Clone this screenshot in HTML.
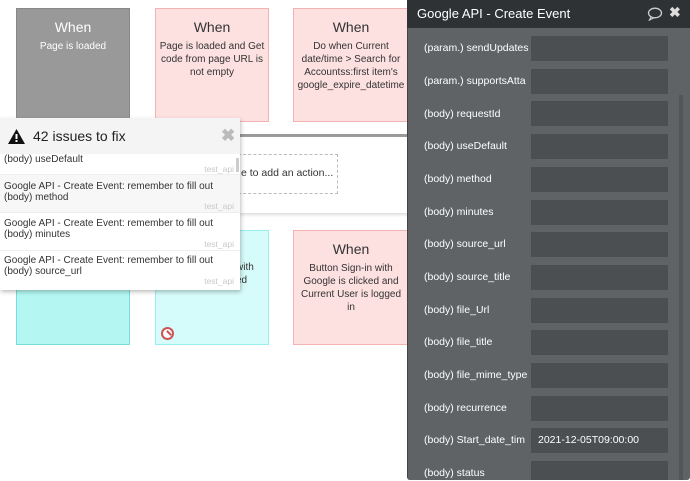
<!DOCTYPE html>
<html><head><style>
*{margin:0;padding:0;box-sizing:border-box}
body{width:690px;height:481px;overflow:hidden;background:#fff;font-family:"Liberation Sans",sans-serif;position:relative}
.b{position:absolute;text-align:center;font-size:10px;line-height:13px;color:#333;padding:9px 3px 0}
.b h{display:block;font-size:14px;line-height:18px;margin-bottom:4px}
.pk{background:#fde0e0;border:1px solid #f4b3b3}
.lab{position:absolute;left:424px;color:#fff;font-size:10.5px}
.inp{position:absolute;left:531px;width:137px;height:25px;background:#4c4f52;color:#fff;font-size:10.5px;padding:6px 0 0 7px}
.it{position:absolute;left:0;width:240px;font-size:10px;line-height:11px;color:#333;padding-left:4px;border-bottom:1px solid #eee}
.ta{position:absolute;right:6px;font-size:8.5px;color:#c8c8c8}
</style></head><body>
<div class="b" style="left:16px;top:8px;width:114px;height:111px;background:#999;border:1px solid #888;color:#fff"><h>When</h>Page is loaded</div>
<div class="b pk" style="left:155px;top:8px;width:114px;height:114px"><h>When</h>Page is loaded and Get code from page URL is not empty</div>
<div class="b pk" style="left:293px;top:8px;width:116px;height:114px"><h>When</h>Do when Current date/time &gt; Search for Accountss:first item's google_expire_datetime</div>
<div style="position:absolute;left:240px;top:134px;width:170px;height:3px;background:#999"></div>
<div style="position:absolute;left:240px;top:137px;width:170px;height:76px;background:#fff;box-shadow:0 2px 3px #ddd"></div>
<div style="position:absolute;left:238px;top:154px;width:100px;height:40px;border:1px dashed #bbb;font-size:10.5px;color:#333;padding:12px 0 0 2px">e to add an action...</div>
<div class="b" style="left:16px;top:230px;width:114px;height:115px;background:#b4f7f2;border:1px solid #7dd"></div>
<div class="b" style="left:155px;top:230px;width:114px;height:115px;background:#d5fbfa;border:1px solid #9ee;text-align:left;padding:30px 0 0 80px">with<br>ed</div>
<div style="position:absolute;left:161px;top:327px;width:13px;height:13px;border:2px solid #c55;border-radius:50%;background:#fff"><div style="position:absolute;left:3px;top:3px;width:6px;height:2px;background:#c55;transform:rotate(45deg)"></div></div>
<div class="b pk" style="left:293px;top:230px;width:116px;height:115px"><h>When</h>Button Sign-in with Google is clicked and Current User is logged in</div>

<div style="position:absolute;left:0;top:118px;width:240px;height:172px;background:#fff;box-shadow:1px 2px 4px rgba(0,0,0,.25)">
<div style="height:36px;background:#f4f4f4;font-size:14px;color:#222;padding:10px 0 0 33px">42 issues to fix</div>
<svg style="position:absolute;left:8px;top:11px" width="17" height="15"><path d="M8.5 0L17 15H0Z" fill="#111"/><rect x="7.5" y="5" width="2" height="5" fill="#fff"/><rect x="7.5" y="11" width="2" height="2" fill="#fff"/></svg>
<div style="position:absolute;left:221px;top:8px;font-size:17px;color:#bbb;font-weight:bold">✖</div>
<div style="position:absolute;left:236px;top:40px;width:3px;height:14px;background:#ccc"></div>
</div>
<div class="it" style="top:154px;height:21px;padding-top:0">(body) useDefault<span class="ta" style="top:10px">test_api</span></div>
<div class="it" style="top:175px;height:38px;padding-top:6px;background:#f7f7f7">Google API - Create Event: remember to fill out (body) method<span class="ta" style="top:26px">test_api</span></div>
<div class="it" style="top:213px;height:38px;padding-top:5px">Google API - Create Event: remember to fill out (body) minutes<span class="ta" style="top:26px">test_api</span></div>
<div class="it" style="top:251px;height:38px;padding-top:4px;border:0">Google API - Create Event: remember to fill out (body) source_url<span class="ta" style="top:25px">test_api</span></div>

<div style="position:absolute;left:407px;top:0;width:283px;height:480px;background:#5f6366;border-left:1px solid #444;border-radius:0 0 3px 3px"></div>
<div style="position:absolute;left:407px;top:0;width:283px;height:28px;background:#2e3234;color:#fff;font-size:13px;padding:6px 0 0 10px">Google API - Create Event</div>
<svg style="position:absolute;left:647px;top:7px" width="16" height="14"><ellipse cx="8" cy="6" rx="6.5" ry="4.8" fill="none" stroke="#ccc" stroke-width="1.3"/><path d="M4 10L2.5 13L7 10.7" fill="none" stroke="#ccc" stroke-width="1.2"/></svg>
<div style="position:absolute;left:669px;top:4px;color:#ddd;font-size:14px;font-weight:bold">✖</div>
<div style="position:absolute;left:679px;top:95px;width:4px;height:385px;background:#555"></div>
<div class="lab" style="top:42px">(param.) sendUpdates</div><div class="inp" style="top:36px"></div>
<div class="lab" style="top:75px">(param.) supportsAtta</div><div class="inp" style="top:69px"></div>
<div class="lab" style="top:108px">(body) requestId</div><div class="inp" style="top:101px"></div>
<div class="lab" style="top:140px">(body) useDefault</div><div class="inp" style="top:134px"></div>
<div class="lab" style="top:173px">(body) method</div><div class="inp" style="top:167px"></div>
<div class="lab" style="top:206px">(body) minutes</div><div class="inp" style="top:200px"></div>
<div class="lab" style="top:238px">(body) source_url</div><div class="inp" style="top:232px"></div>
<div class="lab" style="top:271px">(body) source_title</div><div class="inp" style="top:265px"></div>
<div class="lab" style="top:304px">(body) file_Url</div><div class="inp" style="top:298px"></div>
<div class="lab" style="top:336px">(body) file_title</div><div class="inp" style="top:330px"></div>
<div class="lab" style="top:369px">(body) file_mime_type</div><div class="inp" style="top:363px"></div>
<div class="lab" style="top:402px">(body) recurrence</div><div class="inp" style="top:396px"></div>
<div class="lab" style="top:434px">(body) Start_date_tim</div><div class="inp" style="top:428px">2021-12-05T09:00:00</div>
<div class="lab" style="top:467px">(body) status</div><div class="inp" style="top:461px;height:19px"></div>
</body></html>
